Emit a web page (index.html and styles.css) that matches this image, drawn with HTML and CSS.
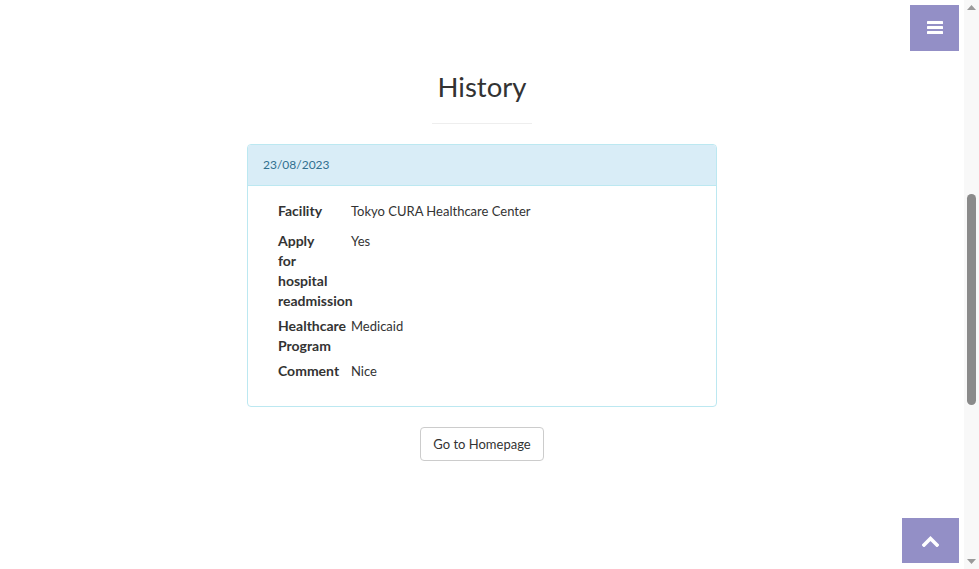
FILE: index.html
```html
<!DOCTYPE html>
<html lang="en">
<head>
<meta charset="utf-8">
<title>CURA Healthcare Service</title>
<link rel="stylesheet" href="styles.css">
</head>
<body>
<div class="frame">
  <main class="page">
    <section id="history" class="history">
      <div class="history-col">
        <h2 class="title">History</h2>
        <hr class="small">
        <div class="panel">
          <div class="panel-heading">23/08/2023</div>
          <div class="panel-body">
            <div class="detail-grid">
              <label class="d-label">Facility</label>
              <p class="d-value">Tokyo CURA Healthcare Center</p>
              <label class="d-label">Apply for hospital readmission</label>
              <p class="d-value">Yes</p>
              <label class="d-label">Healthcare Program</label>
              <p class="d-value">Medicaid</p>
              <label class="d-label">Comment</label>
              <p class="d-value">Nice</p>
            </div>
          </div>
        </div>
        <div class="actions">
          <a href="#" class="btn">Go to Homepage</a>
        </div>
      </div>
    </section>
  </main>

  <aside class="scrollbar" aria-hidden="true">
    <div class="sb-arrow">
      <svg width="9" height="5" viewBox="0 0 9 5"><polygon points="0,5 4.5,0 9,5" fill="#9a9a9a"/></svg>
    </div>
    <div class="sb-track">
      <div class="sb-thumb"></div>
    </div>
    <div class="sb-arrow">
      <svg width="9" height="5" viewBox="0 0 9 5"><polygon points="0,0 9,0 4.5,5" fill="#9a9a9a"/></svg>
    </div>
  </aside>
</div>

<a class="menu-toggle" href="#" aria-label="Toggle menu">
  <svg width="16" height="14" viewBox="0 0 16 14" aria-hidden="true">
    <rect x="0" y="0" width="16" height="3" rx="0.6" fill="#fff"/>
    <rect x="0" y="5" width="16" height="3" rx="0.6" fill="#fff"/>
    <rect x="0" y="10" width="16" height="3" rx="0.6" fill="#fff"/>
  </svg>
</a>

<a class="to-top" href="#history" aria-label="Back to top">
  <svg width="17" height="12" viewBox="0 0 17 12" aria-hidden="true">
    <polyline points="2,10 8.5,3.5 15,10" fill="none" stroke="#fff" stroke-width="3.6" stroke-linecap="square" stroke-linejoin="miter"/>
  </svg>
</a>
</body>
</html>
```

FILE: styles.css
```css
* {
  box-sizing: border-box;
}

html,
body {
  margin: 0;
  padding: 0;
  height: 100%;
}

body {
  font-family: Lato, "Source Sans Pro", "Noto Sans", sans-serif;
  font-size: 13px;
  line-height: 20px;
  color: #333;
  background: #fff;
}

.frame {
  display: flex;
  height: 100%;
}

.page {
  flex: 1;
  min-width: 0;
}

/* history section */
.history {
  padding: 50px 0;
}

.history-col {
  width: 470px;
  margin: 0 auto;
}

.title {
  margin: 20px 0 10px;
  font-size: 27.5px;
  font-weight: 400;
  line-height: 33px;
  text-align: center;
  color: #333;
}

hr.small {
  width: 100px;
  height: 0;
  margin: 20px auto;
  border: 0;
  border-top: 1px solid #eee;
}

.panel {
  margin-bottom: 20px;
  border: 1px solid #bce8f1;
  border-radius: 4px;
  background: #fff;
}

.panel-heading {
  padding: 10px 15px;
  background: #d9edf7;
  color: #31708f;
  font-size: 12px;
  border-bottom: 1px solid #bce8f1;
  border-radius: 3px 3px 0 0;
}

.panel-body {
  padding: 15px;
}

.detail-grid {
  display: grid;
  grid-template-columns: 73px 1fr;
}

.d-label {
  display: block;
  margin: 0 0 5px;
  padding: 0 15px;
  font-size: 14px;
  font-weight: 700;
}

.d-value {
  margin: 0 0 10px;
  padding: 0 15px;
}

.actions {
  display: flex;
  justify-content: center;
}

.btn {
  display: inline-block;
  padding: 6px 12px;
  border: 1px solid #ccc;
  border-radius: 4px;
  background: #fff;
  color: #333;
  font-size: 13px;
  line-height: 20px;
  text-decoration: none;
}

/* page scrollbar */
.scrollbar {
  width: 15px;
  display: flex;
  flex-direction: column;
  background: #f8f8f8;
}

.sb-arrow {
  height: 15px;
  display: flex;
  align-items: center;
  justify-content: center;
}

.sb-track {
  flex: 1;
  padding: 179px 3px 0 3px;
}

.sb-thumb {
  width: 9px;
  height: 211px;
  border-radius: 4.5px;
  background: #8a8a8a;
}

/* fixed controls */
.menu-toggle {
  position: fixed;
  top: 5px;
  right: 20px;
  z-index: 2;
  width: 49px;
  height: 46px;
  display: flex;
  align-items: center;
  justify-content: center;
  background: #938fc6;
}

.to-top {
  position: fixed;
  right: 20px;
  bottom: 6px;
  z-index: 2;
  width: 57px;
  height: 45px;
  display: flex;
  align-items: center;
  justify-content: center;
  background: #938fc6;
}
```
